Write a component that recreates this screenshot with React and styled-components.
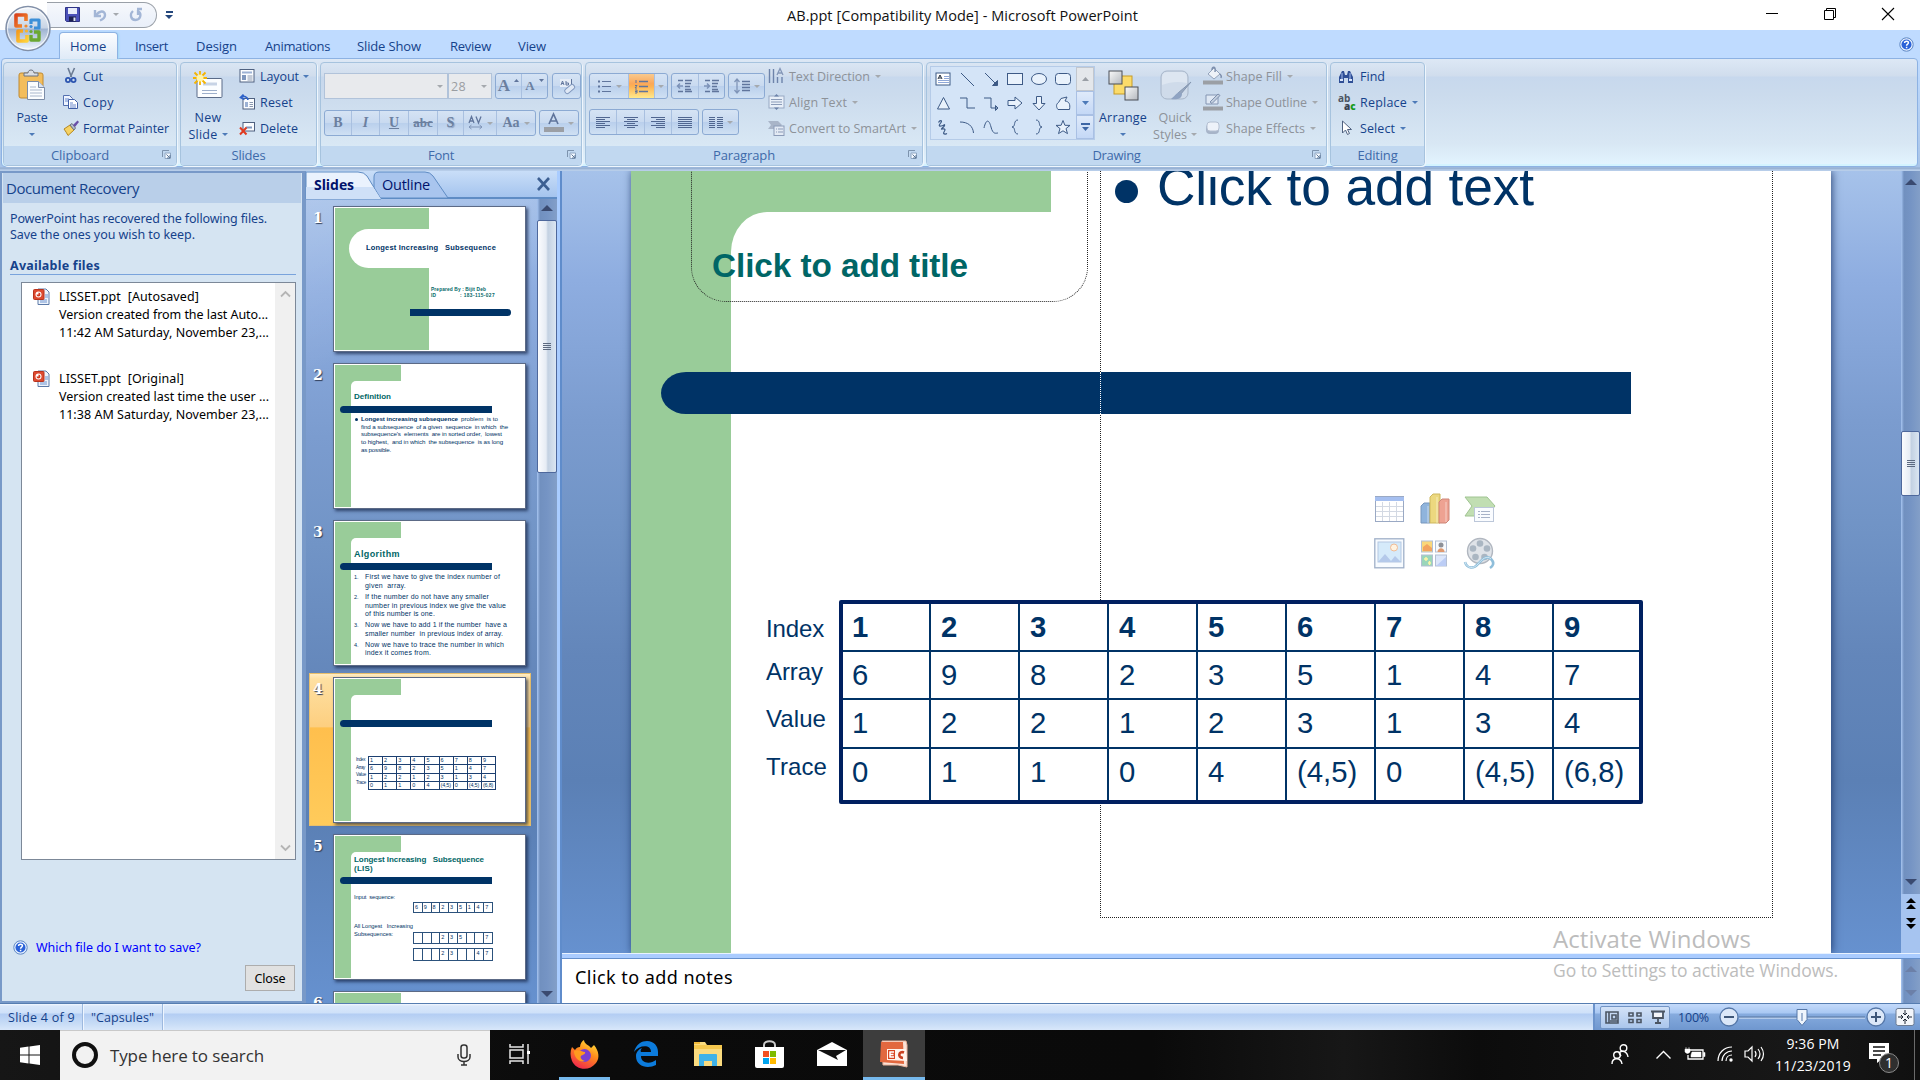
import React, { useLayoutEffect, useRef } from "react";
import styled, { createGlobalStyle, css } from "styled-components";

const UI = '"Open Sans", "Noto Sans", sans-serif';
const TAHOMA = '"Noto Sans", "Open Sans", sans-serif';
const ARIAL = '"Liberation Sans", Arial, sans-serif';

const Global = createGlobalStyle`
  *, *::before, *::after { box-sizing: border-box; }
  body { margin: 0; background: #fff; overflow: hidden; font-family: ${UI}; }
`;

/* ---------- text that spreads its letters over a given width ---------- */
const TextBox = styled.span`
  display: inline-block;
  flex: none;
  width: fit-content;
  white-space: pre;
  font-family: ${(p) => p.$font || "inherit"};
  font-size: ${(p) => p.$size || 12.5}px;
  font-weight: ${(p) => (p.$bold ? 700 : 400)};
  color: ${(p) => p.$color || "inherit"};
  line-height: ${(p) => (p.$lh ? p.$lh + "px" : "normal")};
`;

function Text({ w, size, bold, color, font, lh, children }) {
  const ref = useRef(null);
  useLayoutEffect(() => {
    const el = ref.current;
    if (!w || !el) return;
    el.style.letterSpacing = "0px";
    const natural = el.getBoundingClientRect().width;
    el.style.letterSpacing = (w - natural) / el.textContent.length + "px";
  }, [w, children]);
  return (
    <TextBox ref={ref} $size={size} $bold={bold} $color={color} $font={font} $lh={lh}>
      {children}
    </TextBox>
  );
}

const Svg = styled.svg`
  display: block;
  flex: none;
  overflow: visible;
`;

function Icon({ w = 16, h = 16, vb, children }) {
  return (
    <Svg width={w} height={h} viewBox={vb || `0 0 ${w} ${h}`} fill="none">
      {children}
    </Svg>
  );
}

const Caret = styled.i`
  flex: none;
  width: 0;
  height: 0;
  border: 3px solid transparent;
  border-top-color: ${(p) => (p.$dim ? "#a5a9ae" : "#4d7ab8")};
  border-bottom: 0;
  margin-left: ${(p) => p.$ml || 0}px;
`;

/* ---------- window frame ---------- */
const Screen = styled.div`
  width: 1920px;
  height: 1080px;
  display: flex;
  flex-direction: column;
  overflow: hidden;
  position: relative;
`;

const TitleBar = styled.header`
  height: 30px;
  flex: none;
  background: #fff;
  display: flex;
  align-items: center;
  padding-right: 26px;
`;

const QuickAccess = styled.div`
  width: 110px;
  height: 26px;
  margin: -1px 0 0 47px;
  border: 1px solid #9aa0a8;
  border-left: 0;
  border-radius: 0 13px 13px 0;
  background: linear-gradient(#f6f8fc, #e9eff9);
  display: flex;
  align-items: center;
  padding-left: 18px;
`;

const QuickCell = styled.div`
  width: ${(p) => p.$w}px;
  flex: none;
  display: flex;
`;

const QuickMore = styled.div`
  width: 12px;
  margin-left: 6px;
  display: flex;
  flex-direction: column;
  align-items: center;
  gap: 2px;
  &::before { content: ""; width: 7px; height: 2px; background: #24477c; }
  &::after { content: ""; border: 4px solid transparent; border-top-color: #24477c; border-bottom: 0; }
`;

const TitleText = styled.div`
  margin-left: 612px;
  flex: 1;
  display: flex;
`;

const WinButtons = styled.div`
  display: flex;
  gap: 46px;
  margin-top: -2px;
`;

const Orb = styled.div`
  position: absolute;
  left: 5px;
  top: 5px;
`;

const TabStrip = styled.nav`
  height: 29px;
  flex: none;
  background: #bfdbff;
  display: flex;
  align-items: stretch;
  padding-left: 59px;
  padding-right: 6px;
`;

const Tab = styled.div`
  width: ${(p) => p.$w}px;
  margin-top: 2px;
  padding-top: 1px;
  display: flex;
  align-items: center;
  padding-left: ${(p) => p.$pl}px;
  color: #15428b;
  ${(p) =>
    p.$active &&
    css`
      border: 1px solid #8db2e3;
      border-bottom: 0;
      border-radius: 4px 4px 0 0;
      background: linear-gradient(#fbfdff, #dfeaf7);
      box-shadow: 1px 0 2px #9fd8f5;
      padding-top: 0;
      z-index: 1;
    `}
`;

const HelpSlot = styled.div`
  margin-left: auto;
  padding-top: 7px;
`;

const Ribbon = styled.section`
  height: 109px;
  flex: none;
  margin: -1px 2px 0 1px;
  border: 1px solid #8db2e3;
  border-radius: 4px;
  background: linear-gradient(#dde8f5 0, #d0dded 17px, #c7d8ed 18px, #cbdbed 36px, #d8e7f4 84px, #e3f4ff 106px);
  display: flex;
  padding: 3px 0 0 1px;
  gap: 3px;
  box-shadow: inset 0 -2px 0 #d3f3ff;
`;

const RibbonBack = styled.div`
  flex: none;
  height: 112px;
  background: linear-gradient(#bfdbff 0, #a8c4e8 108px, #8fa9cc 109px, #b7cde9 111px);
`;

const GroupBox = styled.div`
  width: ${(p) => p.$w}px;
  margin-left: ${(p) => p.$ml || 0}px;
  height: 104px;
  flex: none;
  border: 1px solid #a6c3de;
  border-radius: 4px;
  display: flex;
  flex-direction: column;
  box-shadow: 1px 1px 0 #eef6fd;
  overflow: hidden;
`;

const GroupBody = styled.div`
  flex: 1;
  min-height: 0;
  display: flex;
  align-items: flex-start;
`;

const GroupLabel = styled.div`
  height: 19px;
  flex: none;
  background: #c1d8f0;
  color: #3e6aaa;
  display: flex;
  align-items: center;
  justify-content: center;
  padding-right: ${(p) => (p.$launch ? 20 : 0)}px;
  position: relative;
`;

const Launcher = styled.div`
  position: absolute;
  right: 5px;
  top: 4px;
`;

const LAUNCH = (
  <Launcher>
    <Icon w={9} h={9}>
      <path d="M.5 7V.5H7" stroke="#7d93ad" />
      <path d="M3 3h5.500v5.500H3z" fill="#f4f9ff" stroke="#8ea6c2" />
      <path d="M4.500 4.500L8 8M8 5v3H5" stroke="#5c7796" />
    </Icon>
  </Launcher>
);

function Group({ w, ml, label, lw, launch, children }) {
  return (
    <GroupBox $w={w} $ml={ml}>
      <GroupBody>{children}</GroupBody>
      <GroupLabel $launch={launch}>
        <Text w={lw} size={13} lh={17}>{label}</Text>
        {launch && LAUNCH}
      </GroupLabel>
    </GroupBox>
  );
}

const BigButton = styled.div`
  width: ${(p) => p.$w}px;
  margin-left: ${(p) => p.$ml || 0}px;
  height: 82px;
  flex: none;
  padding-top: 7px;
  display: flex;
  flex-direction: column;
  align-items: center;
  color: ${(p) => (p.$dim ? "#8d9299" : "#15428b")};
`;

const BigIcon = styled.div`
  height: 39px;
`;

const BigLine = styled.div`
  height: 17px;
  display: flex;
  align-items: center;
`;

const SmallColumn = styled.div`
  display: flex;
  flex-direction: column;
  margin-left: ${(p) => p.$ml || 0}px;
  flex: none;
`;

const SmallRow = styled.div`
  height: 26px;
  display: flex;
  align-items: center;
  color: ${(p) => (p.$dim ? "#8d9299" : "#15428b")};
`;

const IconSlot = styled.div`
  width: ${(p) => p.$w || 20}px;
  flex: none;
`;

function Small({ icon, slot, w, dim, caret, children }) {
  return (
    <SmallRow $dim={dim}>
      <IconSlot $w={slot}>{icon}</IconSlot>
      <Text w={w} size={12.500} lh={17}>{children}</Text>
      {caret && <Caret $ml={caret} $dim={dim} />}
    </SmallRow>
  );
}

const ToolRows = styled.div`
  display: flex;
  flex-direction: column;
  gap: ${(p) => p.$gap}px;
  padding: 10px 0 0 3px;
  flex: none;
`;

const ToolRow = styled.div`
  display: flex;
  gap: ${(p) => p.$gap ?? 3}px;
  height: 26px;
`;

const ComboBox = styled.div`
  width: ${(p) => p.$w}px;
  margin-right: ${(p) => p.$mr || 0}px;
  border: 1px solid #b1c3da;
  background: #e8eaed;
  display: flex;
  align-items: center;
  justify-content: space-between;
  padding: 0 4px 0 2px;
  color: #9a9da2;
`;

const ToolGroup = styled.div`
  display: flex;
  border: 1px solid #8caad3;
  border-radius: 3px;
  background: linear-gradient(#d5e3f4 0, #c9daf0 48%, #b9cfec 50%, #cfe0f3 100%);
  overflow: hidden;
  flex: none;
`;

const Tool = styled.div`
  width: ${(p) => p.$w}px;
  display: flex;
  align-items: center;
  justify-content: center;
  gap: 4px;
  color: #6b7f9f;
  & + & { border-left: 1px solid #a9c0e0; }
  ${(p) =>
    p.$on &&
    css`
      background: linear-gradient(#f9c98d 0, #fba85a 40%, #fdb052 50%, #ffe98c 100%);
    `}
`;

const Letter = styled.b`
  font: ${(p) => (p.$light ? 400 : 700)} ${(p) => p.$size || 14}px "Liberation Serif", serif;
  font-style: ${(p) => (p.$italic ? "italic" : "normal")};
  text-decoration: ${(p) => p.$deco || "none"};
  text-shadow: ${(p) => (p.$shadow ? "1px 1px 1px #8da0c0" : "none")};
`;

/* ---------- icons ---------- */
const HelpIcon = () => (
  <Icon w={15} h={15}>
    <circle cx="7.500" cy="7.500" r="6.700" fill="#e9f2ff" stroke="#5c86c4" />
    <circle cx="7.500" cy="7.500" r="5" fill="#2b62d8" />
    <path d="M5.600 6c0-2.500 4-2.300 3.800 0c-.1 1.200-1.800 1.200-1.800 2.700M7.600 9.800v1.400" stroke="#fff" strokeWidth="1.500" />
  </Icon>
);

const OfficeOrb = () => (
  <Icon w={47} h={47}>
    <defs>
      <linearGradient id="orb" x1="0" y1="0" x2="0" y2="1">
        <stop offset="0" stopColor="#f4f7fb" />
        <stop offset=".48" stopColor="#c9d5e6" />
        <stop offset=".52" stopColor="#9fb4d2" />
        <stop offset="1" stopColor="#f3f9ff" />
      </linearGradient>
      <linearGradient id="orbR" x1="0" y1="0" x2="1" y2="1">
        <stop offset="0" stopColor="#d9431c" />
        <stop offset="1" stopColor="#f7912d" />
      </linearGradient>
      <linearGradient id="orbY" x1="0" y1="0" x2="1" y2="1">
        <stop offset="0" stopColor="#f59b1c" />
        <stop offset="1" stopColor="#ffd23a" />
      </linearGradient>
    </defs>
    <circle cx="23" cy="23.500" r="22" fill="url(#orb)" stroke="#8290a8" strokeWidth="1.500" />
    <circle cx="23" cy="23.500" r="20.500" stroke="#fff" opacity=".8" />
    <path d="M17 21h-6V10h10v6" stroke="url(#orbR)" strokeWidth="3.600" strokeLinejoin="round" />
    <path d="M26 19v-4h8v8h-5" stroke="#3b8fd8" strokeWidth="3.200" strokeLinejoin="round" />
    <path d="M18 26h-5v10h9v-6" stroke="url(#orbY)" strokeWidth="3.600" strokeLinejoin="round" />
    <path d="M26 30v5h8v-8h-5" stroke="#6ba832" strokeWidth="3.400" strokeLinejoin="round" />
    <circle cx="21" cy="21" r="1.600" fill="#f08a2c" />
    <circle cx="26" cy="21.500" r="1.600" fill="#3b8fd8" />
    <circle cx="21.500" cy="26" r="1.600" fill="#f9b52a" />
    <circle cx="26" cy="26.500" r="1.600" fill="#6ba832" />
  </Icon>
);

const SaveIcon = () => (
  <Icon w={15} h={15}>
    <path d="M.5.5h14v14h-13l-1-1z" fill="#4a50b8" stroke="#2f3486" />
    <path d="M3 1h9v6H3z" fill="#e8ecfa" />
    <path d="M4 9.500h7v5H4z" fill="#1c2050" />
    <path d="M8.500 10.500h2v3.500h-2z" fill="#dfe5f7" />
  </Icon>
);

const UndoIcon = () => (
  <Icon w={14} h={14}>
    <path d="M2 2v6h6" stroke="#a3b6d6" strokeWidth="2.400" />
    <path d="M3 7.500C6 2.500 12 2 12 7c0 3-2.500 4.500-5 5.500" stroke="#a3b6d6" strokeWidth="2.400" />
  </Icon>
);
const RedoIcon = () => (
  <Icon w={14} h={14}>
    <path d="M4 3C.5 6 1.500 12 6.500 12S13 6 9.500 3.500M8 1h5M9 2v5" stroke="#a3b6d6" strokeWidth="2.300" />
  </Icon>
);

const PasteIcon = () => (
  <Icon w={28} h={30}>
    <rect x="1" y="3" width="24" height="25" rx="2" fill="#f3bd5c" stroke="#c08a32" />
    <path d="M6 6V3h4c0-4 6-4 6 0h4v3z" fill="#d9dde4" stroke="#6b7280" />
    <path d="M9.500 11.500h11l6 6v12h-17z" fill="#fbfdff" stroke="#7c8da8" />
    <path d="M20.500 11.500v6h6" fill="#dbe4f1" stroke="#7c8da8" />
    <path d="M12 17h6M12 20h12M12 23h12M12 26h12" stroke="#a9b7cc" />
  </Icon>
);

const CutIcon = () => (
  <Icon w={16} h={16}>
    <path d="M5 0l3.500 9M11.500 0L7.500 9" stroke="#6b7b93" strokeWidth="1.600" />
    <circle cx="5" cy="12" r="2.100" stroke="#2d55b0" strokeWidth="1.800" />
    <circle cx="10.500" cy="12" r="2.100" stroke="#2d55b0" strokeWidth="1.800" />
  </Icon>
);

const CopyIcon = () => (
  <Icon w={16} h={16}>
    <path d="M.5 1.500h6l3 3v7h-9z" fill="#eef4ff" stroke="#5470b0" />
    <path d="M5.500 5.500h6l3 3v6h-9z" fill="#fff" stroke="#3f5ea6" />
    <path d="M2 5h4M2 7h3M7 9h3M7 11h6M7 13h6" stroke="#6a89cc" />
  </Icon>
);

const PainterIcon = () => (
  <Icon w={16} h={16}>
    <path d="M1 9l6-4 4 5-6 5.500c-1-2-2.500-4.500-4-6.500z" fill="#f6d264" stroke="#b58820" />
    <path d="M7 5l2-1.500L12.500 8 11 10z" fill="#b8c0cc" stroke="#6b7280" />
    <path d="M10 5l4.500-4.500L16 2l-4 5z" fill="#6a4fa8" />
  </Icon>
);

const NewSlideIcon = () => (
  <Icon w={32} h={30}>
    <rect x="5" y="8.500" width="25" height="19" rx="1" fill="#fbfdff" stroke="#5a6b88" />
    <path d="M10 20.500h15M10 23.500h15" stroke="#9dafcb" />
    <path d="M11 14h14" stroke="#c7d3e5" strokeWidth="3" />
    <g stroke="#f5b400" strokeWidth="1.800">
      <path d="M8 1v14M1 8h14M2.500 2.500l11 11M13.500 2.500l-11 11" />
    </g>
    <circle cx="8" cy="8" r="3.500" fill="#fff3a8" />
  </Icon>
);

const LayoutIcon = () => (
  <Icon w={16} h={14}>
    <rect x="1" y=".5" width="14" height="12.500" fill="#fbfdff" stroke="#4f6180" />
    <path d="M3 3.500h10" stroke="#9db2d4" strokeWidth="2" />
    <path d="M3 6h4v5H3z" fill="#7f97bd" />
    <path d="M8.500 7h5M8.500 9h5M8.500 11h5" stroke="#8b99b0" />
  </Icon>
);
const ResetIcon = () => (
  <Icon w={16} h={16}>
    <rect x="4" y="4.500" width="11.500" height="10.500" fill="#fbfdff" stroke="#4f6180" />
    <path d="M6 8h3v5H6z" fill="#9db2d4" />
    <path d="M10.500 8.500h3.500M10.500 10.500h3.500M10.500 12.500h3.500" stroke="#8b99b0" />
    <path d="M9 6C8.500 2.500 5 1.500 2 3.500M4.500.5L1.500 3.500l4 2" stroke="#2f62c8" strokeWidth="1.700" />
  </Icon>
);
const DeleteIcon = () => (
  <Icon w={16} h={16}>
    <rect x="4" y="2.500" width="11.500" height="8.500" fill="#fbfdff" stroke="#4f6180" />
    <path d="M7 7.500h6" stroke="#7f97bd" strokeWidth="2" />
    <path d="M1 7.500l6.500 7M7.500 7.500l-6.500 7" stroke="#e03a20" strokeWidth="2" />
  </Icon>
);

const lines = (ys, x1 = 0, x2 = 15) => ys.map(([y, a, b]) => `M${a ?? x1} ${y}h${(b ?? x2) - (a ?? x1)}`).join("");
const INK = "#60759c";

const Bullets = () => (
  <Icon w={15} h={14}>
    <path d="M5 2.500h9M5 7.500h9M5 12.500h9" stroke={INK} />
    <path d="M1 2.500h2M1 7.500h2M1 12.500h2" stroke={INK} strokeWidth="2" />
  </Icon>
);
const Numbering = () => (
  <Icon w={15} h={14}>
    <path d="M5 2.500h9M5 7.500h9M5 12.500h9" stroke={INK} strokeWidth="1.300" />
    <path d="M2 1v3M1 6.500h2l-2 2.500h2M1 11h2v3H1M1 12.500h2" stroke={INK} />
  </Icon>
);
const Indent = ({ flip }) => (
  <Icon w={16} h={14}>
    <path d="M1 1.500h5M1 12.500h5M8 1.500h7M8 4.500h6M8 7.500h5M8 10.500h6M8 12.500h7" stroke={INK} strokeWidth="1.300" />
    <path d={flip ? "M0 7h5M3 4.500L5.500 7 3 9.500" : "M6 7H1M3 4.500L.5 7 3 9.500"} stroke="#7c92b8" strokeWidth="1.500" />
  </Icon>
);
const Spacing = () => (
  <Icon w={16} h={16}>
    <path d="M8 3.500h8M8 6.500h8M8 9.500h8M8 12.500h8" stroke={INK} strokeWidth="1.300" />
    <path d="M3 1v14M.5 4L3 1l2.500 3M.5 12L3 15l2.500-3" stroke="#8095b8" strokeWidth="1.300" />
  </Icon>
);
const Align = ({ kind }) => {
  const d = {
    left: [[1.5, 0, 14], [3.5, 0, 9], [5.5, 0, 14], [7.5, 0, 9], [9.5, 0, 14], [11.5, 0, 9]],
    center: [[1.5, 0, 14], [3.5, 3, 11], [5.5, 0, 14], [7.5, 3, 11], [9.5, 0, 14], [11.5, 3, 11]],
    right: [[1.5, 0, 14], [3.5, 5, 14], [5.5, 0, 14], [7.5, 5, 14], [9.5, 0, 14], [11.5, 5, 14]],
    full: [[1.5], [3.5], [5.5], [7.5], [9.5], [11.5]].map(([y]) => [y, 0, 14]),
    columns: [1.5, 3.5, 5.5, 7.5, 9.5, 11.5].flatMap((y) => [[y, 0, 6], [y, 8, 14]]),
  }[kind];
  return (
    <Icon w={14} h={13}>
      <path d={lines(d)} stroke="#506690" strokeWidth="1.100" />
    </Icon>
  );
};

const TextDirIcon = () => (
  <Icon w={17} h={17}>
    <path d="M1.500 1v14M5.500 1v14M9.500 9v6M14 9v6" stroke="#6d83aa" strokeWidth="1.400" />
    <path d="M9 7l3-6.500L15 7M10 5h4" stroke="#8497b8" strokeWidth="1.300" />
  </Icon>
);
const AlignTextIcon = () => (
  <Icon w={17} h={16}>
    <rect x="1" y="2" width="15" height="12" fill="#e8eff8" stroke="#98a9c4" />
    <path d="M3 5.500h11M3 8h11M3 10.500h11" stroke="#8a9bb8" />
    <path d="M6 2.500L8.500 0 11 2.500zM6 13.500L8.500 16l2.500-2.500z" fill="#6d83aa" />
  </Icon>
);
const SmartIcon = () => (
  <Icon w={17} h={16}>
    <path d="M0 1h10l4 4-4 4H0l3-4z" fill="#a9b5c8" />
    <rect x="6" y="6" width="10" height="9.500" fill="#e3eaf4" stroke="#8b9bb8" />
    <path d="M8 9h1M10 9h5M8 12h1M10 12h5" stroke="#8b9bb8" />
  </Icon>
);

const S = "#3d5a86";
const shapes = [
  <><rect x="1" y="2" width="14" height="12" fill="#fff" stroke={S} /><path d="M9 5.500h5M9 7.500h5M3 9.500h11M3 11.500h11" stroke="#8ea7d8" /><path d="M3 8l2-4 2 4M4 7h2" stroke="#1f2937" /></>,
  <path d="M2 2l13 13" stroke={S} />,
  <path d="M2 2l12 12M14.500 9.500v5h-5z" stroke={S} fill={S} />,
  <rect x=".5" y="2.500" width="15" height="11" fill="#e9f2fc" stroke={S} />,
  <ellipse cx="8" cy="8" rx="7.500" ry="5.500" fill="#e9f2fc" stroke={S} />,
  <rect x=".5" y="2.500" width="15" height="11" rx="3" fill="#e9f2fc" stroke={S} />,
  <path d="M8.500 2.500l6 11.500h-12z" fill="#e9f2fc" stroke={S} />,
  <path d="M1 3h7v10h8" stroke={S} />,
  <path d="M1 3h7v10h6M12.500 10.500l2.500 2.500-2.500 2.500z" stroke={S} />,
  <path d="M1 5.500h7V2l7 6-7 6v-3.500H1z" fill="#e9f2fc" stroke={S} />,
  <path d="M5.500 1.500v7H2l6 6.500 6-6.500h-3.500v-7z" fill="#e9f2fc" stroke={S} />,
  <path d="M3 14.500C1 12 1 9 3.500 7.500L6 3.500 12 2 10 6c4 .5 5.500 3 4.500 8.500z" fill="#e9f2fc" stroke={S} />,
  <path d="M3.500 3.500c1.500-3 4-2 2.500 0s-3 4 0 3.500 4-2.500 3.500-.5-5 4-2 3.500 3 1 1.500 3 1.500 2.500 3 1.500" stroke={S} strokeWidth="1.200" />,
  <path d="M1 3c8 0 13 4 13.500 11" stroke={S} />,
  <path d="M1 9C3 0 6 0 8 8s5 6 7 6" stroke={S} />,
  <path d="M11 1C6 1 9 8 5 8c4 0 1 7 6 7" stroke={S} />,
  <path d="M5 1c5 0 2 7 6 7-4 0-1 7-6 7" stroke={S} />,
  <path d="M8 1.500l1.900 4.800 5.100.1-4 3.200 1.500 5L8 11.800 3.500 14.600l1.500-5-4-3.200 5.100-.1z" fill="#e9f2fc" stroke={S} />,
];

const Gallery = styled.div`
  display: flex;
  height: 74px;
  margin: 3px 0 0 3px;
  flex: none;
  background: #d4e4f7;
  border: 1px solid #b5cbe8;
`;
const GalleryGrid = styled.div`
  width: 145px;
  display: grid;
  grid-template-columns: repeat(6, 24px);
  grid-template-rows: repeat(3, 24px);
  place-items: center;
`;
const GalleryBars = styled.div`
  width: 18px;
  display: grid;
  grid-template-rows: repeat(3, 1fr);
`;
const GalleryBar = styled.div`
  border: 1px solid ${(p) => (p.$dim ? "#c2c7ce" : "#a9c0e4")};
  background: ${(p) => (p.$dim ? "#e4e7eb" : "linear-gradient(#dfeafa, #c4d8f6)")};
  display: grid;
  place-content: center;
`;

const ArrangeIcon = () => (
  <Icon w={31} h={31}>
    <defs>
      <linearGradient id="gray" x1="0" y1="0" x2="1" y2="1">
        <stop offset="0" stopColor="#fafafa" />
        <stop offset="1" stopColor="#b4b8be" />
      </linearGradient>
    </defs>
    <rect x="6" y="6" width="18" height="18" fill="#fbdb6a" stroke="#c69b28" />
    <rect x="1" y="1" width="13" height="13" fill="url(#gray)" stroke="#4a4f57" />
    <rect x="17" y="17" width="13" height="13" fill="url(#gray)" stroke="#4a4f57" />
  </Icon>
);
const QuickIcon = () => (
  <Icon w={31} h={31}>
    <rect x="1" y="1" width="27" height="28" rx="6" fill="#cfdbea" stroke="#a7b5c8" />
    <path d="M2 8c0-4 2-6 6-6h13c4 0 6 2 6 6v5c-9-2-17-1-25 2z" fill="#dde6f1" />
    <path d="M31 12L20 25l-2-2z" fill="#98a8c0" stroke="#8496b0" />
    <path d="M20 22c-3 0-4 3-9 7 5 1 11 0 11-5z" fill="#8fa3c2" />
  </Icon>
);
const FillIcon = () => (
  <Icon w={21} h={18}>
    <path d="M5 7l6-6 6 6-6 5z" fill="#eef2f8" stroke="#93a3bc" />
    <path d="M9 3c0-4 4-4 3 2M17 7c2 2 1 4 1 4" stroke="#7e90ae" strokeWidth="1.500" />
    <path d="M0 13.500h20v4H0z" fill="#9b9fa5" />
  </Icon>
);
const OutlineIcon = () => (
  <Icon w={21} h={18}>
    <path d="M15 2H3v9h12z" fill="#dfe8f4" stroke="#8495b2" />
    <path d="M7 9l8-8 2 1.500-8 8z" fill="#c2cede" stroke="#7e90ae" />
    <path d="M0 13.500h20v4H0z" fill="#9b9fa5" />
  </Icon>
);
const EffectsIcon = () => (
  <Icon w={21} h={16}>
    <rect x="3" y="4" width="13" height="10" rx="4" fill="#a7b4c8" />
    <rect x="4" y="2" width="12" height="9" rx="3" fill="#edf2f9" stroke="#b4c0d2" />
  </Icon>
);
const FindIcon = () => (
  <Icon w={16} h={15}>
    <path d="M1 14V8l3-6h2l1 4h2l1-4h2l3 6v6h-5V9H6v5z" fill="#2f4f96" />
    <path d="M4 4v6M12 4v6" stroke="#a9c0ef" />
    <path d="M2 11h3M11 11h3" stroke="#dbe6fb" strokeWidth="2" />
  </Icon>
);
const AbAc = styled.span`
  display: grid;
  font: 700 10px/8px ${UI};
  color: #4b5563;
  height: 16px;
  & b { padding-left: 6px; color: #374151; }
  & i { font-style: normal; color: #179a1c; }
`;
const SelectIcon = () => (
  <Icon w={16} h={16}>
    <path d="M4.500 1v12l3-3 2 4.500 2-1-2-4h4z" fill="#fff" stroke="#4f6180" />
  </Icon>
);

/* ---------- work area ---------- */
const Work = styled.main`
  flex: none;
  height: 832px;
  display: flex;
  background: #7899c8;
`;

const Recovery = styled.aside`
  width: 300px;
  margin: 2px 4px 2px 2px;
  background: #d5e4f2;
  display: flex;
  flex-direction: column;
  color: #15428b;
  flex: none;
`;
const RecoveryHead = styled.div`
  height: 30px;
  margin: 0 1px;
  background: #b9cfe9;
  padding-left: 3px;
  display: flex;
  align-items: center;
`;
const RecoveryIntro = styled.div`
  display: flex;
  flex-direction: column;
  padding: 8px 0 0 8px;
`;
const RecoveryTitle = styled.div`
  margin: 14px 6px 0 8px;
  height: 18px;
  border-bottom: 1px solid #79a3dc;
  display: flex;
`;
const FileList = styled.div`
  margin: 7px 6px 0 19px;
  height: 578px;
  border: 1px solid #7c8898;
  background: #fff;
  color: #000;
  display: flex;
`;
const FileItems = styled.div`
  flex: 1;
  padding: 5px 0 0 11px;
  display: flex;
  flex-direction: column;
  gap: 28px;
`;
const FileItem = styled.div`
  display: flex;
  gap: 9px;
`;
const FileLines = styled.div`
  display: flex;
  flex-direction: column;
`;
const FileScroll = styled.div`
  width: 20px;
  flex: none;
  background: #f0f0f0;
  display: flex;
  flex-direction: column;
  justify-content: space-between;
  align-items: center;
  padding: 8px 0;
`;
const HelpLink = styled.div`
  margin: 78px 0 0 11px;
  height: 18px;
  display: flex;
  align-items: center;
  gap: 8px;
`;
const CloseButton = styled.div`
  width: 50px;
  height: 26px;
  margin: 9px 7px 0 auto;
  border: 1px solid #adadad;
  background: #e1e1e1;
  color: #000;
  display: grid;
  place-items: center;
`;

const PptIcon = () => (
  <Icon w={17} h={17}>
    <path d="M5 1h8l3 3v12.500H5z" fill="#eef4fc" stroke="#5c7aa8" />
    <path d="M7 12h7M7 14h7M12 7h3M12 9h3" stroke="#6f94cf" />
    <rect x=".5" y="1.500" width="10.500" height="10" rx="1" fill="#dd4a30" stroke="#b8321c" />
    <circle cx="5.500" cy="6.500" r="3" fill="#fff" />
    <path d="M5.500 6.500V4.500a2 2 0 1 1-2 2z" fill="#d2391f" />
  </Icon>
);

const paneBlue = "linear-gradient(#a6c2ea 0, #8eade0 14%, #7b9ccf 32%, #7194c6 45%, #6386ba 62%, #5b80b5 78%, #6691cf 100%)";

const SlidesPane = styled.section`
  width: 254px;
  flex: none;
  display: flex;
  flex-direction: column;
  background: ${paneBlue};
  border-right: 3px solid #a9ccff;
`;
const PaneTabs = styled.div`
  height: 28px;
  flex: none;
  display: flex;
  align-items: center;
  background: linear-gradient(#c9def8, #a5c4ee);
  border-bottom: 2px solid #5f8cc4;
  position: relative;
  color: #00126b;
`;
const PaneTabShapes = styled.div`
  position: absolute;
  left: 0;
  top: 0;
`;
const PaneTabText = styled.div`
  position: relative;
  margin-left: ${(p) => p.$ml}px;
  width: ${(p) => p.$w}px;
`;
const PaneBody = styled.div`
  flex: 1;
  display: flex;
  min-height: 0;
`;
const ThumbList = styled.div`
  width: 231px;
  padding: 3px 0 0 3px;
  display: flex;
  flex-direction: column;
  overflow: hidden;
  gap: 4px;
  flex: none;
  background: linear-gradient(155deg, rgba(255, 255, 255, 0.16) 0, rgba(255, 255, 255, 0.02) 150px, transparent 160px);
`;
const ThumbRow = styled.div`
  width: 222px;
  height: 153px;
  flex: none;
  padding-top: 4px;
  display: flex;
  ${(p) =>
    p.$on &&
    css`
      background: linear-gradient(#fff0cd 0, #fee0a2 6px, #fdcf80 35%, #ffbf4d 36%, #ffcb5b 100%);
      box-shadow: inset 0 0 0 1px #e8bf6c;
    `}
`;
const ThumbNo = styled.div`
  width: 24px;
  padding: 3px 0 0 4px;
  font: 700 14px/18px "DejaVu Serif", "Liberation Serif", serif;
  color: #fff;
  text-shadow: 1px 1px 1px #33415c;
`;
const ThumbSlide = styled.div`
  width: 193px;
  height: 146px;
  border: 1px solid #5c6a86;
  box-shadow: 2px 2px 3px rgba(20, 35, 70, 0.7);
  background: #fff;
  position: relative;
  overflow: hidden;
  font-family: ${ARIAL};
  color: #003366;
`;
const Placed = styled.div`
  position: absolute;
  left: ${(p) => p.$x}px;
  top: ${(p) => p.$y}px;
  line-height: 0;
`;
const Block = styled.div`
  position: absolute;
  left: ${(p) => p.$x}px;
  top: ${(p) => p.$y}px;
  width: ${(p) => p.$w}px;
  height: ${(p) => p.$h}px;
  background: ${(p) => p.$bg};
  border-radius: ${(p) => p.$r || 0};
`;

const Mini = ({ x, y, w, children, size = 7, bold, color }) => (
  <Placed $x={x - 1} $y={y - 6}>
    <Text w={w} size={size} lh={10} bold={bold} color={color} font={ARIAL}>{children}</Text>
  </Placed>
);

const MiniGrid = styled.div`
  position: absolute;
  left: ${(p) => p.$x}px;
  top: ${(p) => p.$y}px;
  width: ${(p) => p.$w}px;
  height: ${(p) => p.$h}px;
  display: grid;
  grid-template-columns: repeat(9, 1fr);
  gap: ${(p) => p.$gap || "1px"};
  padding: 1px;
  background: ${(p) => p.$line || "#2c527c"};
  & > span {
    background: #fff;
    font-size: ${(p) => p.$fs || 5.5}px;
    line-height: ${(p) => p.$lh}px;
    padding-left: 1px;
    overflow: hidden;
    white-space: nowrap;
    letter-spacing: -0.2px;
  }
`;

const GREEN = "#99cc99";
const NAVY = "#003366";
const TEAL = "#006666";

const MiniMaster = () => (
  <>
    <Block $x={1} $y={1} $w={66} $h={40} $bg={GREEN} />
    <Block $x={1} $y={1} $w={16} $h={142} $bg={GREEN} />
    <Block $x={17} $y={17} $w={60} $h={40} $bg="#fff" $r="5px 0 0 0" />
    <Block $x={6} $y={42} $w={152} $h={7} $bg={NAVY} $r="4px 0 0 4px" />
  </>
);

const rows = [
  ["1", "2", "3", "4", "5", "6", "7", "8", "9"],
  ["6", "9", "8", "2", "3", "5", "1", "4", "7"],
  ["1", "2", "2", "1", "2", "3", "1", "3", "4"],
  ["0", "1", "1", "0", "4", "(4,5)", "0", "(4,5)", "(6,8)"],
];

const thumbs = [
  <>
    <Block $x={1} $y={1} $w={94} $h={142} $bg={GREEN} />
    <Block $x={15} $y={22} $w={90} $h={39} $bg="#fff" $r="20px 0 0 20px" />
    <Mini x={33} y={42} w={130} bold size={7.500}>{"Longest Increasing   Subsequence"}</Mini>
    <Mini x={98} y={84} w={55} bold size={4.800} color={TEAL}>Prepared By : Bijit Deb</Mini>
    <Mini x={98} y={90} w={5} bold size={4.800} color={TEAL}>ID</Mini>
    <Mini x={127} y={90} w={35} bold size={4.800} color={TEAL}>: 183-115-027</Mini>
    <Block $x={76} $y={102} $w={101} $h={7} $bg={NAVY} $r="0 4px 4px 0" />
  </>,
  <>
    <MiniMaster />
    <Mini x={21} y={34} w={37} bold size={8} color={TEAL}>Definition</Mini>
    <Block $x={21} $y={54} $w={3} $h={3} $bg={NAVY} $r="2px" />
    <Mini x={28} y={56} w={97} bold size={6.200}>Longest increasing subsequence</Mini>
    <Mini x={128} y={56} w={37} size={6.200}>problem  is to</Mini>
    <Mini x={28} y={64} w={147} size={6.200}>find a subsequence  of a given  sequence  in which  the</Mini>
    <Mini x={28} y={71} w={141} size={6.200}>subsequence's  elements  are in sorted order,  lowest</Mini>
    <Mini x={28} y={79} w={142} size={6.200}>to highest,  and in which  the subsequence  is as long</Mini>
    <Mini x={28} y={87} w={30} size={6.200}>as possible.</Mini>
  </>,
  <>
    <MiniMaster />
    <Mini x={21} y={34} w={46} bold size={9} color={TEAL}>Algorithm</Mini>
    {[[57, "1."], [77, "2."], [105, "3."], [125, "4."]].map(([y, t]) => (
      <Mini key={t} x={21} y={y} size={5.500}>{t}</Mini>
    ))}
    <Mini x={32} y={57} w={135}>First we have to give the index number of</Mini>
    <Mini x={32} y={66} w={41}>given  array.</Mini>
    <Mini x={32} y={77} w={124}>If the number do not have any smaller</Mini>
    <Mini x={32} y={86} w={141}>number in previous index we give the value</Mini>
    <Mini x={32} y={94} w={70}>of this number is one.</Mini>
    <Mini x={32} y={105} w={142}>Now we have to add 1 if the number  have a</Mini>
    <Mini x={32} y={114} w={138}>smaller number  in previous index of array.</Mini>
    <Mini x={32} y={125} w={139}>Now we have to trace the number in which</Mini>
    <Mini x={32} y={133} w={66}>index it comes from.</Mini>
  </>,
  <>
    <MiniMaster />
    <Mini x={23} y={83} w={9} size={4.500}>Index</Mini>
    <Mini x={23} y={91} w={9} size={4.500}>Array</Mini>
    <Mini x={23} y={98} w={10} size={4.500}>Value</Mini>
    <Mini x={23} y={106} w={10} size={4.500}>Trace</Mini>
    <MiniGrid $x={34} $y={78} $w={128} $h={34} $lh={6.500} $line="#1c3f70">
      {rows.flatMap((r, i) => r.map((c, j) => <span key={`${i}-${j}`}>{c}</span>))}
    </MiniGrid>
  </>,
  <>
    <MiniMaster />
    <Mini x={21} y={26} w={130} bold size={8} color={TEAL}>{"Longest Increasing   Subsequence"}</Mini>
    <Mini x={21} y={35} w={19} bold size={8} color={TEAL}>(LIS)</Mini>
    <Mini x={21} y={63} w={41} size={5.800}>Input  sequence:</Mini>
    <MiniGrid $x={79} $y={67} $w={80} $h={11} $lh={9}>
      {["6", "9", "8", "2", "3", "5", "1", "4", "7"].map((c, i) => <span key={i}>{c}</span>)}
    </MiniGrid>
    <Mini x={21} y={92} w={59} size={5.800}>All Longest   Increasing</Mini>
    <Mini x={21} y={100} w={39} size={5.800}>Subsequences:</Mini>
    <MiniGrid $x={79} $y={97} $w={80} $h={12} $lh={9}>
      {["", "", "", "2", "3", "5", "", "", "7"].map((c, i) => <span key={i}>{c}</span>)}
    </MiniGrid>
    <MiniGrid $x={79} $y={113} $w={80} $h={13} $lh={9}>
      {["", "", "", "2", "3", "", "", "4", "7"].map((c, i) => <span key={i}>{c}</span>)}
    </MiniGrid>
  </>,
  <MiniMaster />,
];

const ScrollTrack = styled.div`
  width: ${(p) => p.$w}px;
  flex: ${(p) => (p.$grow ? 1 : "none")};
  background: linear-gradient(90deg, #a7c5f1 0, #7190bf 3px, #7594c4 50%, #839fc8 100%);
  display: flex;
  flex-direction: column;
  align-items: center;
`;
const Arrow = styled.i`
  width: 0;
  height: 0;
  flex: none;
  border: ${(p) => p.$s || 6}px solid transparent;
  ${(p) =>
    p.$up
      ? css`border-bottom-color: ${p.$c || "#3a4a70"}; border-top: 0;`
      : css`border-top-color: ${p.$c || "#3a4a70"}; border-bottom: 0;`}
  margin-top: ${(p) => p.$mt || 0}px;
`;
const Thumb = styled.div`
  width: 100%;
  height: ${(p) => p.$h}px;
  margin-top: ${(p) => p.$mt}px;
  flex: none;
  border: 1px solid #4e689c;
  border-radius: 2px;
  background: linear-gradient(90deg, #fbfcfe 0, #e6ecf4 45%, #c3d1e2 55%, #dbe6f2 100%);
  display: grid;
  place-content: center;
  &::before {
    content: "";
    width: 8px;
    height: 8px;
    background: repeating-linear-gradient(#5d6a80 0 1px, transparent 1px 2px);
  }
`;

const EditorColumn = styled.section`
  flex: 1;
  display: flex;
  flex-direction: column;
  border-left: 2px solid #5f8ccb;
`;
const EditorArea = styled.div`
  height: 782px;
  display: flex;
`;
const Canvas = styled.div`
  width: 1339px;
  flex: none;
  background: ${paneBlue};
  position: relative;
  overflow: hidden;
`;
const Slide = styled.div`
  position: absolute;
  left: 69px;
  top: 0;
  width: 1200px;
  height: 782px;
  background: #fff;
  color: ${NAVY};
  font-family: ${ARIAL};
  box-shadow: 1px 0 8px rgba(25, 50, 100, 0.85);
`;
const Dotted = styled.div`
  position: absolute;
  left: ${(p) => p.$x}px;
  top: ${(p) => p.$y}px;
  width: ${(p) => p.$w}px;
  height: ${(p) => p.$h}px;
  border: 1px dotted ${(p) => p.$c || "#222"};
  border-radius: ${(p) => p.$r || 0};
  ${(p) => p.$leftOnly && "border-width: 0 0 0 1px;"}
`;
const Table = styled.div`
  position: absolute;
  left: 208px;
  top: 429px;
  width: 804px;
  height: 204px;
  border: 4px solid #002060;
  border-radius: 2px;
  background: #fff;
  display: grid;
  grid-template-columns: 86px repeat(7, 89px) 1fr;
  grid-template-rows: 46px 48px 49px 1fr;
`;
const Cell = styled.div`
  border-left: ${(p) => (p.$first ? 0 : 2)}px solid ${NAVY};
  border-top: ${(p) => (p.$top ? 0 : 2)}px solid ${NAVY};
  padding-left: ${(p) => (p.$first ? 9 : 10)}px;
  font-size: 29.3px;
  line-height: ${(p) => (p.$top ? 45 : 46)}px;
  font-weight: ${(p) => (p.$top ? 700 : 400)};
  overflow: hidden;
  white-space: nowrap;
`;
const Bullet = styled.div`
  position: absolute;
  left: 484px;
  top: 9px;
  width: 23px;
  height: 23px;
  border-radius: 50%;
  background: ${NAVY};
`;
const Faded = styled.div`
  position: absolute;
  left: 743px;
  top: 322px;
  display: grid;
  grid-template-columns: 46px 44px 32px;
  grid-template-rows: 45px 32px;
`;

const RightScroll = styled.div`
  width: 19px;
  display: flex;
  flex-direction: column;
`;
const PageButtons = styled.div`
  height: 59px;
  background: #a6c4f0;
  display: flex;
  flex-direction: column;
  align-items: center;
  padding-top: 4px;
`;
const Splitter = styled.div`
  height: 6px;
  flex: none;
  background: #aaccff;
  border-top: 1px solid #e8f2ff;
  border-bottom: 1px solid #6590cc;
`;
const Notes = styled.div`
  flex: 1;
  display: flex;
  background: #fff;
`;
const NotesText = styled.div`
  width: 1339px;
  padding: 6px 0 0 13px;
`;

const Watermark = styled.div`
  position: absolute;
  left: 1553px;
  top: 922px;
  display: flex;
  flex-direction: column;
  color: #bcbcbc;
`;

/* ---------- status bar ---------- */
const StatusBar = styled.footer`
  height: 27px;
  flex: none;
  border-top: 1px solid #567db1;
  background: linear-gradient(#f3f8ff 0, #d9e7fa 2px, #cfe1f9 9px, #b3cdf3 10px, #c6dbf6 19px, #d8e7fa 26px);
  display: flex;
  color: #15428b;
  padding-left: 8px;
`;
const StatusCell = styled.div`
  width: ${(p) => p.$w}px;
  margin-right: ${(p) => p.$mr}px;
  border-right: 1px solid #9db9df;
  box-shadow: 1px 0 0 #eef5ff;
  display: flex;
  align-items: center;
`;
const StatusRight = styled.div`
  margin-left: auto;
  width: 327px;
  border-left: 2px solid #6b93cc;
  background: linear-gradient(#c4dafa 0, #a9c8f3 9px, #86abde 10px, #6f97cf 26px);
  display: flex;
  align-items: center;
  padding-left: 5px;
`;
const ViewButtons = styled.div`
  height: 23px;
  width: 70px;
  border: 1px solid #7294c4;
  border-radius: 2px;
  background: linear-gradient(#d3e2f7, #aac6ec);
  display: grid;
  grid-template-columns: repeat(3, 1fr);
  place-items: center;
  margin-right: 8px;
`;

/* ---------- taskbar ---------- */
const TaskBar = styled.footer`
  height: 50px;
  flex: none;
  background: linear-gradient(90deg, #161616, #0b0b0b 30%, #0a0a0a 60%, #171717 70%, #0c0c0c 77%, #171717 93%, #101010);
  display: flex;
  color: #fff;
`;
const StartCell = styled.div`
  width: 60px;
  display: grid;
  place-items: center;
`;
const Search = styled.div`
  width: 430px;
  background: #f2f2f2;
  border-top: 1px solid #c9c9c9;
  display: flex;
  align-items: center;
  padding: 0 19px 1px 12px;
  color: #333;
  & > svg:last-child { margin-left: auto; }
`;
const Ring = styled.div`
  width: 26px;
  height: 26px;
  border: 4px solid #101010;
  border-radius: 50%;
  margin-right: 12px;
`;
const TaskCell = styled.div`
  width: ${(p) => p.$w || 62}px;
  display: grid;
  place-items: center;
  padding: 0 1px 2px 0;
  background: ${(p) => (p.$on ? "#3d3d3d" : "transparent")};
  box-shadow: ${(p) => (p.$line ? "inset 0 -3px 0 #76b9ed" : "none")};
  margin-right: ${(p) => p.$mr || 0}px;
  margin-left: ${(p) => p.$ml || 0}px;
`;
const Tray = styled.div`
  margin-left: auto;
  display: flex;
  align-items: center;
`;
const TrayCell = styled.div`
  width: ${(p) => p.$w}px;
  flex: none;
`;
const TrayIcons = styled.div`
  display: flex;
  align-items: center;
  margin: -2px 2px 0 -2px;
`;
const Clock = styled.div`
  width: 78px;
  display: flex;
  flex-direction: column;
  align-items: center;
  margin-right: 17px;
`;
const ShowDesktop = styled.div`
  width: 6px;
  height: 50px;
  border-left: 1px solid #6b6b6b;
`;

const RibbonBar = () => (
  <Ribbon>
    <Group w={174} label="Clipboard" lw={58} launch>
      <BigButton $w={56}>
        <BigIcon><PasteIcon /></BigIcon>
        <BigLine><Text w={31}>Paste</Text></BigLine>
        <BigLine><Caret /></BigLine>
      </BigButton>
      <SmallColumn $ml={3}>
        <Small icon={<CutIcon />} w={20}>Cut</Small>
        <Small icon={<CopyIcon />} w={31}>Copy</Small>
        <Small icon={<PainterIcon />} w={86}>Format Painter</Small>
      </SmallColumn>
    </Group>
    <Group w={137} label="Slides" lw={34}>
      <BigButton $w={54}>
        <BigIcon><NewSlideIcon /></BigIcon>
        <BigLine><Text w={27}>New</Text></BigLine>
        <BigLine><Text w={29}>Slide</Text><Caret $ml={4} /></BigLine>
      </BigButton>
      <SmallColumn $ml={4}>
        <Small icon={<LayoutIcon />} slot={21} w={39} caret={4}>Layout</Small>
        <Small icon={<ResetIcon />} slot={21} w={33}>Reset</Small>
        <Small icon={<DeleteIcon />} slot={21} w={38}>Delete</Small>
      </SmallColumn>
    </Group>
    <Group w={262} label="Font" lw={26} launch>
      <ToolRows $gap={11}>
        <ToolRow $gap={0}>
          <ComboBox $w={124}><span /><Caret $dim /></ComboBox>
          <ComboBox $w={44} $mr={3}><Text w={15}>28</Text><Caret $dim /></ComboBox>
          <ToolGroup>
            <Tool $w={25}><Letter $size={17}>A</Letter><Icon w={5} h={14}><path d="M0 3l2.500-3L5 3z" fill="#60759c" /></Icon></Tool>
            <Tool $w={26}><Letter $size={13}>A</Letter><Icon w={5} h={14}><path d="M0 0h5L2.500 3z" fill="#60759c" /></Icon></Tool>
          </ToolGroup>
          <Tool $w={4} />
          <ToolGroup>
            <Tool $w={27}>
              <Icon w={16} h={16}>
                <path d="M1 1h11v8H1z" fill="#e6edf7" />
                <path d="M2 7l1.500-4L5 7M2.500 5.500h2M7 3v4h2.500V5H7M12.500 1v7" stroke="#60759c" />
                <rect x="5" y="9" width="11" height="5" rx="2" transform="rotate(-40 10 11)" fill="#dfe8f5" stroke="#8097bd" />
              </Icon>
            </Tool>
          </ToolGroup>
        </ToolRow>
        <ToolRow>
          <ToolGroup>
            <Tool $w={26}><Letter>B</Letter></Tool>
            <Tool $w={28}><Letter $italic>I</Letter></Tool>
            <Tool $w={29}><Letter $deco="underline">U</Letter></Tool>
            <Tool $w={29}><Letter $size={13} $deco="line-through">abc</Letter></Tool>
            <Tool $w={26}><Letter $shadow>S</Letter></Tool>
            <Tool $w={33}>
              <Icon w={15} h={14}>
                <path d="M1 .5L3.500 7 6 .5M8 7L10.500.5 13 7M9 5h3" stroke={INK} strokeWidth="1.300" transform="translate(14 0) scale(-1 1)" />
                <path d="M1 11h13M3.500 9L1 11l2.500 2M11.500 9l2.500 2-2.500 2" stroke="#8095b8" />
              </Icon>
              <Caret $dim />
            </Tool>
            <Tool $w={39}><Letter $size={14}>Aa</Letter><Caret $dim /></Tool>
          </ToolGroup>
          <ToolGroup>
            <Tool $w={38}>
              <Icon w={20} h={18}>
                <path d="M5 10L9.500 0 14 10M6.500 7h6" stroke={INK} strokeWidth="1.700" />
                <path d="M0 13h20v5H0z" fill="#9b9fa5" />
              </Icon>
              <Caret $dim />
            </Tool>
          </ToolGroup>
        </ToolRow>
      </ToolRows>
    </Group>
    <Group w={338} label="Paragraph" lw={62} launch>
      <ToolRows $gap={10}>
        <ToolRow>
          <ToolGroup>
            <Tool $w={38}><Bullets /><Caret $dim /></Tool>
            <Tool $w={26} $on><Numbering /></Tool>
            <Tool $w={13}><Caret $dim /></Tool>
          </ToolGroup>
          <ToolGroup>
            <Tool $w={26}><Indent /></Tool>
            <Tool $w={26}><Indent flip /></Tool>
          </ToolGroup>
          <ToolGroup><Tool $w={35}><Spacing /><Caret $dim /></Tool></ToolGroup>
        </ToolRow>
        <ToolRow>
          <ToolGroup>
            <Tool $w={26}><Align kind="left" /></Tool>
            <Tool $w={28}><Align kind="center" /></Tool>
            <Tool $w={27}><Align kind="right" /></Tool>
            <Tool $w={27}><Align kind="full" /></Tool>
          </ToolGroup>
          <ToolGroup><Tool $w={35}><Align kind="columns" /><Caret $dim /></Tool></ToolGroup>
        </ToolRow>
      </ToolRows>
      <SmallColumn $ml={3}>
        <Small dim icon={<TextDirIcon />} slot={21} w={81} caret={5}>Text Direction</Small>
        <Small dim icon={<AlignTextIcon />} slot={21} w={58} caret={5}>Align Text</Small>
        <Small dim icon={<SmartIcon />} slot={21} w={117} caret={5}>Convert to SmartArt</Small>
      </SmallColumn>
    </Group>
    <Group w={401} label="Drawing" lw={48} launch>
      <Gallery>
        <GalleryGrid>
          {shapes.map((s, i) => <Icon key={i} w={16} h={16}>{s}</Icon>)}
        </GalleryGrid>
        <GalleryBars>
          <GalleryBar $dim><Icon w={7} h={4}><path d="M0 4l3.500-4L7 4z" fill="#9a9fa6" /></Icon></GalleryBar>
          <GalleryBar><Icon w={7} h={4}><path d="M0 0h7L3.500 4z" fill="#4d7ab8" /></Icon></GalleryBar>
          <GalleryBar><Icon w={9} h={8}><path d="M0 0h9v2H0zM1 4h7L4.500 8z" fill="#3d66a5" /></Icon></GalleryBar>
        </GalleryBars>
      </Gallery>
      <BigButton $w={56}>
        <BigIcon><ArrangeIcon /></BigIcon>
        <BigLine><Text w={48}>Arrange</Text></BigLine>
        <BigLine><Caret /></BigLine>
      </BigButton>
      <BigButton $w={48} $dim>
        <BigIcon><QuickIcon /></BigIcon>
        <BigLine><Text w={33}>Quick</Text></BigLine>
        <BigLine><Text w={34}>Styles</Text><Caret $ml={4} $dim /></BigLine>
      </BigButton>
      <SmallColumn $ml={4}>
        <Small dim icon={<FillIcon />} slot={23} w={56} caret={5}>Shape Fill</Small>
        <Small dim icon={<OutlineIcon />} slot={23} w={81} caret={5}>Shape Outline</Small>
        <Small dim icon={<EffectsIcon />} slot={23} w={79} caret={5}>Shape Effects</Small>
      </SmallColumn>
    </Group>
    <Group w={95} label="Editing" lw={40}>
      <SmallColumn $ml={7}>
        <Small icon={<FindIcon />} slot={22} w={25}>Find</Small>
        <Small icon={<AbAc><span>ab</span><b>a<i>c</i></b></AbAc>} slot={22} w={47} caret={5}>Replace</Small>
        <Small icon={<SelectIcon />} slot={22} w={35} caret={5}>Select</Small>
      </SmallColumn>
    </Group>
  </Ribbon>
);

const RecoveryPane = () => (
  <Recovery>
    <RecoveryHead><Text w={133} size={15}>Document Recovery</Text></RecoveryHead>
    <RecoveryIntro>
      <Text w={257} size={12.500} lh={16} font={TAHOMA}>PowerPoint has recovered the following files.</Text>
      <Text w={185} size={12.500} lh={16} font={TAHOMA}>Save the ones you wish to keep.</Text>
    </RecoveryIntro>
    <RecoveryTitle><Text w={90} bold size={12.500} lh={17} font={TAHOMA}>Available files</Text></RecoveryTitle>
    <FileList>
      <FileItems>
        {[
          [["LISSET.ppt  [Autosaved]", 140], ["Version created from the last Auto...", 209], ["11:42 AM Saturday, November 23,...", 210]],
          [["LISSET.ppt  [Original]", 125], ["Version created last time the user ...", 210], ["11:38 AM Saturday, November 23,...", 210]],
        ].map((item, i) => (
          <FileItem key={i}>
            <PptIcon />
            <FileLines>
              {item.map(([t, w]) => <Text key={t} w={w} size={12.500} lh={18} font={TAHOMA}>{t}</Text>)}
            </FileLines>
          </FileItem>
        ))}
      </FileItems>
      <FileScroll>
        <Icon w={9} h={6}><path d="M0 5.500L4.500 1 9 5.500" stroke="#b5b5b5" strokeWidth="1.800" /></Icon>
        <Icon w={9} h={6}><path d="M0 .5L4.500 5 9 .5" stroke="#b5b5b5" strokeWidth="1.800" /></Icon>
      </FileScroll>
    </FileList>
    <HelpLink>
      <HelpIcon />
      <Text w={165} size={12.500} color="#0000ff" font={TAHOMA}>Which file do I want to save?</Text>
    </HelpLink>
    <CloseButton><Text w={31} size={12.500} font={TAHOMA}>Close</Text></CloseButton>
  </Recovery>
);

const SlidesPanel = () => (
  <SlidesPane>
    <PaneTabs>
      <PaneTabShapes>
        <Icon w={250} h={27}>
          <path d="M68 27V6q0-5 5-5h46q5 0 8 4l15 22z" fill="#a9c5ee" stroke="#5f8cc4" />
          <path d="M0 28V1h52q6 0 9 4l14 23z" fill="#eaf2fd" stroke="#5f8cc4" />
          <path d="M0 16h67l8 12H0z" fill="#cfe0f7" />
        </Icon>
      </PaneTabShapes>
      <PaneTabText $ml={8} $w={68}><Text w={40} bold size={14}>Slides</Text></PaneTabText>
      <PaneTabText $ml={0} $w={155}><Text w={48} size={14.500}>Outline</Text></PaneTabText>
      <Icon w={13} h={12}><path d="M1 0l11 12M12 0L1 12" stroke="#3c5f92" strokeWidth="2.600" /></Icon>
    </PaneTabs>
    <PaneBody>
      <ThumbList>
        {thumbs.map((t, i) => (
          <ThumbRow key={i} $on={i === 3}>
            <ThumbNo>{i + 1}</ThumbNo>
            <ThumbSlide>{t}</ThumbSlide>
          </ThumbRow>
        ))}
      </ThumbList>
      <ScrollTrack $w={20}>
        <Arrow $up $mt={6} />
        <Thumb $h={253} $mt={9} />
        <Arrow $mt={518} />
      </ScrollTrack>
    </PaneBody>
  </SlidesPane>
);

const FadedIcons = () => (
  <Faded>
    <Icon w={31} h={31}>
      <rect x="1.500" y="3.500" width="28" height="25" fill="#fff" stroke="#9aa9c4" />
      <path d="M1 4h29v4H1z" fill="#a5bff0" />
      <path d="M2 13.500h27M2 18.500h27M2 23.500h27M8.500 9v19M15.500 9v19M22.500 9v19" stroke="#d3d9e3" />
    </Icon>
    <Icon w={31} h={31}>
      <path d="M1 13l3-3h6v20H1z" fill="#8fb4dc" stroke="#7897bd" />
      <path d="M10 4l3-3h7v29h-10z" fill="#ecd87f" stroke="#cdb75e" />
      <path d="M19 9l3-3h7v21l-3 3h-7z" fill="#eea292" stroke="#cd8678" />
      <path d="M17 4v26M26 9v20M8 13v17" stroke="#fff" opacity=".5" />
    </Icon>
    <Icon w={32} h={31}>
      <path d="M1 4h22l8 9-8 10H1l7-10z" fill="#c1deb2" stroke="#a0c492" />
      <rect x="10.500" y="14.500" width="19" height="14" fill="#fafcff" stroke="#bcc7d9" />
      <path d="M14 18.500h2M17 18.500h9M14 21.500h2M17 21.500h9M14 24.500h2M17 24.500h9" stroke="#a8b3c8" />
    </Icon>
    <Icon w={31} h={31}>
      <rect x=".8" y=".8" width="29" height="29" fill="#f7fbff" stroke="#9fb0c8" strokeWidth="1.300" />
      <rect x="4" y="4" width="23" height="20" fill="#d5eafa" stroke="#b5c8e2" />
      <circle cx="20" cy="9.500" r="3.500" fill="#fff3e0" stroke="#f0bb95" />
      <path d="M4 24l7-8 6 7 4-5 6 6z" fill="#b4c9ea" />
    </Icon>
    <Icon w={31} h={31}>
      <rect x="1.500" y="3" width="11" height="11" fill="#fad77a" stroke="#b4bfd3" />
      <path d="M3 9l4-3 5 4v3H3z" fill="#f3a35f" />
      <rect x="15.500" y="3" width="11" height="11" fill="#f7f9fc" stroke="#b4bfd3" />
      <circle cx="21" cy="7" r="2.500" fill="#8d9097" /><path d="M17.500 14c0-5 7-5 7 0z" fill="#e09a70" />
      <rect x="1.500" y="17" width="11" height="11" fill="#9ad6ba" stroke="#b4bfd3" />
      <path d="M4 21h4M6 19v4M8 25h3M9.500 23v4" stroke="#fcf5a5" strokeWidth="1.400" />
      <rect x="15.500" y="17" width="11" height="11" fill="#dce6fb" stroke="#b4bfd3" />
      <path d="M16 28l10-9v9z" fill="#bccdf5" />
    </Icon>
    <Icon w={31} h={31}>
      <circle cx="16" cy="13" r="12.500" fill="#dfe3e8" stroke="#b1b7c0" strokeWidth="1.400" />
      {[[16, 5.5], [9, 10.5], [23, 10.500], [11.500, 19], [20.500, 19]].map(([x, y]) => (
        <circle key={x} cx={x} cy={y} r="3.300" fill="#aab6c2" />
      ))}
      <path d="M1 24c2 7 9 7 13 2s9-9 13-5c4 4 2 7-1 9" stroke="#8fbeda" strokeWidth="2.600" />
      <path d="M1 24c2 7 9 7 13 2s9-9 13-5" stroke="#d3e8f4" strokeWidth="1" />
    </Icon>
  </Faded>
);

const Editor = () => (
  <EditorColumn>
    <EditorArea>
      <Canvas>
        <Slide>
          <Block $x={0} $y={0} $w={420} $h={41} $bg={GREEN} />
          <Block $x={0} $y={0} $w={100} $h={782} $bg={GREEN} />
          <Block $x={100} $y={41} $w={40} $h={42} $bg={GREEN} />
          <Block $x={100} $y={41} $w={320} $h={741} $bg="#fff" $r="36px 0 0 0 / 40px 0 0 0" />
          <Block $x={30} $y={201} $w={970} $h={42} $bg={NAVY} $r="25px 0 0 25px / 21px 0 0 21px" />
          <Dotted $x={60} $y={-120} $w={397} $h={251} $r="35px" />
          <Dotted $x={469} $y={-200} $w={673} $h={947} />
          <Dotted $x={469} $y={201} $w={1} $h={42} $c="#fff" $leftOnly />
          <Placed $x={81} $y={76}><Text w={256} size={33.300} lh={38} bold color={TEAL}>Click to add title</Text></Placed>
          <Bullet />
          <Placed $x={526} $y={-14}><Text w={377} size={53.300} lh={60}>Click to add text</Text></Placed>
          <FadedIcons />
          {[["Index", 455, 58], ["Array", 498, 57], ["Value", 545, 60], ["Trace", 593, 61]].map(([t, y, w]) => (
            <Placed key={t} $x={135} $y={y - 11}><Text w={w} size={24} lh={28}>{t}</Text></Placed>
          ))}
          <Table>
            {rows.flatMap((r, i) =>
              r.map((c, j) => <Cell key={`${i}-${j}`} $first={j === 0} $top={i === 0}>{c}</Cell>)
            )}
          </Table>
        </Slide>
      </Canvas>
      <RightScroll>
        <ScrollTrack $w={19} $grow>
          <Arrow $up $mt={8} />
          <Thumb $h={65} $mt={246} />
          <Arrow $mt={383} />
        </ScrollTrack>
        <PageButtons>
          <Arrow $up $s={5} $c="#000" /><Arrow $up $s={5} $c="#000" $mt={1} />
          <Arrow $s={5} $c="#000" $mt={9} /><Arrow $s={5} $c="#000" $mt={1} />
        </PageButtons>
      </RightScroll>
    </EditorArea>
    <Splitter />
    <Notes>
      <NotesText><Text w={158} size={18} color="#000" font={TAHOMA}>Click to add notes</Text></NotesText>
      <ScrollTrack $w={19}>
        <Arrow $up $mt={7} $c="#6c80a8" />
        <Arrow $mt={18} $c="#6c80a8" />
      </ScrollTrack>
    </Notes>
  </EditorColumn>
);

const Status = () => (
  <StatusBar>
    <StatusCell $w={75} $mr={8}><Text w={67}>Slide 4 of 9</Text></StatusCell>
    <StatusCell $w={72} $mr={0}><Text w={63}>"Capsules"</Text></StatusCell>
    <StatusRight>
      <ViewButtons>
        <Icon w={14} h={13}><path d="M1 1h12v11H1zM4 1v11M7 4h4v4H7zM5 10h8" stroke="#4b5563" strokeWidth="1.600" /></Icon>
        <Icon w={14} h={13}><path d="M1 2h4v3H1zM9 2h4v3H9zM1 8.500h4v3H1zM9 8.500h4v3H9z" stroke="#4b5563" strokeWidth="1.600" /></Icon>
        <Icon w={14} h={14}><path d="M0 1.500h14M2 2v6h10V2M7 8v4M4 13h6" stroke="#4b5563" strokeWidth="1.800" /><path d="M3 3h8v4H3z" fill="#f4f6fa" /></Icon>
      </ViewButtons>
      <Text w={31}>100%</Text>
      <Icon w={206} h={24}>
        <path d="M30 13h126" stroke="#e6effc" />
        <path d="M30 12h126" stroke="#54759f" />
        <circle cx="20" cy="12" r="9" fill="#dbe7f8" stroke="#5577a8" strokeWidth="1.300" />
        <path d="M15 12h10" stroke="#3f5779" strokeWidth="2" />
        <path d="M88 4.500h10v10l-5 6-5-6z" fill="#eef4fc" stroke="#5577a8" />
        <path d="M93 8v8" stroke="#5577a8" />
        <circle cx="167" cy="12" r="9" fill="#dbe7f8" stroke="#5577a8" strokeWidth="1.300" />
        <path d="M162 12h10M167 7v10" stroke="#3f5779" strokeWidth="2" />
        <rect x="187" y="3.500" width="18" height="17" rx="2" fill="#f2f5fa" stroke="#6c7c94" />
        <path d="M196 5v5M196 14v5M189 12h5M198 12h5M194 8l2 2 2-2M194 16l2-2 2 2M192 10l2 2-2 2M200 10l-2 2 2 2" stroke="#1f2937" />
      </Icon>
    </StatusRight>
  </StatusBar>
);

const Taskbar = () => (
  <TaskBar>
    <StartCell>
      <Icon w={20} h={20}>
        <path d="M0 2.800L8.500 1.600v8H0zM9.500 1.500L20 0v9.600H9.500zM0 10.500h8.500v8L0 17.300zM9.500 10.500H20V20L9.500 18.600z" fill="#fff" />
      </Icon>
    </StartCell>
    <Search>
      <Ring />
      <Text w={154} size={17}>Type here to search</Text>
      <Icon w={14} h={22}>
        <rect x="4" y="1" width="6" height="13" rx="2.500" stroke="#333" strokeWidth="1.500" />
        <path d="M1 10v3c0 6 12 6 12 0v-3M7 17.500V21M4 21h6" stroke="#333" strokeWidth="1.500" />
      </Icon>
    </Search>
    <TaskCell $w={60}>
      <Icon w={21} h={20}>
        <path d="M1 0v3h13V0M1 20v-3h13v3M1 6h13v8H1zM19 0v20" stroke="#e6e6e6" strokeWidth="1.500" />
        <path d="M18 7h3v3h-3z" fill="#fff" />
      </Icon>
    </TaskCell>
    <TaskCell $w={51} $ml={9} $mr={5} $line>
      <Icon w={29} h={29}>
        <defs>
          <linearGradient id="ff" x1=".8" y1="0" x2=".3" y2="1">
            <stop offset="0" stopColor="#ffe43a" />
            <stop offset=".45" stopColor="#ff8a1c" />
            <stop offset="1" stopColor="#f0264e" />
          </linearGradient>
        </defs>
        <path d="M2 7l3 3c1-2 3-3 5-3 0-3 2-6 4-7 0 4 5 5 7 8l3-3c5 6 6 13 2 18-7 9-20 7-24-2C0 16 0 11 2 7z" fill="url(#ff)" />
        <circle cx="14.500" cy="15.500" r="6.500" fill="#7a3fd1" />
        <path d="M4 11c4-2 8 1 11 1 1 2-3 3-4 4s0 4 4 5c-5 2-11-3-11-10z" fill="#ff9a1f" />
      </Icon>
    </TaskCell>
    <TaskCell>
      <Icon w={25} h={26}>
        <path d="M1 11C3 3 9 0 14 0c7 0 11 5 11 11v4H8c0 8 10 8 15 4v5c-8 4-20 2-20-9 0-4 3-7 6-8-1 1-2 3-1 4h10c0-8-12-7-17 0z" fill="#0c7bdb" />
      </Icon>
    </TaskCell>
    <TaskCell>
      <Icon w={28} h={24}>
        <path d="M0 0h11l2 3h15v21H0z" fill="#fadb7f" />
        <path d="M0 3h28v4H0z" fill="#f5c84f" />
        <path d="M5 24V13q0-1 1-1h16q1 0 1 1v11h-5v-5h-8v5z" fill="#3fb2e8" />
        <path d="M0 0h6v2H0z" fill="#f0b93a" />
      </Icon>
    </TaskCell>
    <TaskCell>
      <Icon w={29} h={29}>
        <path d="M9 9V5c0-5 11-5 11 0v4" stroke="#c9c9c9" strokeWidth="2" />
        <path d="M0 7h29v19q0 2-2 2H2q-2 0-2-2z" fill="#fff" />
        <path d="M8 11h6v6H8z" fill="#f25022" /><path d="M15 11h6v6h-6z" fill="#7fba00" />
        <path d="M8 18h6v6H8z" fill="#00a4ef" /><path d="M15 18h6v6h-6z" fill="#ffb900" />
      </Icon>
    </TaskCell>
    <TaskCell>
      <Icon w={30} h={24}>
        <path d="M0 8L15 0l15 8v16H0z" fill="#fff" />
        <path d="M1 8h28L19 14l2 4-8-4z" fill="#111" />
      </Icon>
    </TaskCell>
    <TaskCell $w={62} $on $line>
      <Icon w={29} h={27}>
        <path d="M3 0h24l1 4v22l-9-2H4z" fill="#fbe3d8" stroke="#eab39c" />
        <path d="M2 1h22l1 22-24-2z" fill="#e2683f" />
        <path d="M8 8h19l1 12-20-1z" fill="#fff3ec" />
        <path d="M9 9h7v9H9z" fill="#d8441f" />
        <path d="M15 11h-4v5h4M11 13.500h3.500" stroke="#fff" strokeWidth="1.500" />
        <path d="M25 11.500c-5-2-7 5-1 5.500" stroke="#c93f1f" strokeWidth="2.600" />
      </Icon>
    </TaskCell>
    <Tray>
      <TrayIcons>
        <TrayCell $w={45}>
          <Icon w={18} h={20}>
            <circle cx="12.500" cy="4" r="3.300" stroke="#fff" strokeWidth="1.400" />
            <path d="M8 9c3-3 8-2 9 4M8 9l2 3" stroke="#fff" strokeWidth="1.400" />
            <circle cx="6" cy="11" r="3.300" stroke="#fff" strokeWidth="1.400" />
            <path d="M1 20c0-7 9-7 10 0" stroke="#fff" strokeWidth="1.400" />
          </Icon>
        </TrayCell>
        <TrayCell $w={29}><Icon w={15} h={9}><path d="M.5 8.500l7-7 7 7" stroke="#fff" strokeWidth="1.400" /></Icon></TrayCell>
        <TrayCell $w={32}>
          <Icon w={20} h={14}>
            <path d="M5 3h13v9H3V8" stroke="#fff" strokeWidth="1.300" />
            <path d="M7 5h9v5H6V8zM18.500 5.500h1.500v4h-1.500zM0 2h5v3q-2.500 3-5 0zM1 0v2M4 0v2" fill="#fff" stroke="#fff" strokeWidth=".5" />
          </Icon>
        </TrayCell>
        <TrayCell $w={27}>
          <Icon w={16} h={16}>
            <path d="M1 15C1 7 7 1 15 1M5 15C5 9.500 9.500 5 15 5M9 15c0-3.500 2.500-6 6-6" stroke="#fff" strokeWidth="1.200" />
            <circle cx="14" cy="14" r="1.700" fill="#fff" />
          </Icon>
        </TrayCell>
        <TrayCell $w={28}>
          <Icon w={21} h={16}>
            <path d="M1 5h3l4-4v14l-4-4H1z" stroke="#fff" strokeWidth="1.200" />
            <path d="M11 5q2 3 0 6M14 3q4 5 0 10M17 1q5 7 0 14" stroke="#fff" strokeWidth="1.200" />
          </Icon>
        </TrayCell>
      </TrayIcons>
      <Clock>
        <Text w={53} size={14} lh={22}>9:36 PM</Text>
        <Text w={76} size={14} lh={22}>11/23/2019</Text>
      </Clock>
      <TrayCell $w={45}>
        <Icon w={34} h={32}>
          <path d="M0 4h20v16h-7l-5 4v-4H0z" fill="#fff" />
          <path d="M4 8h12M4 12h12M4 16h8" stroke="#111" strokeWidth="1.500" />
          <circle cx="20" cy="24" r="9.500" fill="#2f2f2f" stroke="#8a8a8a" />
          <text x="20" y="29" fontSize="14" fill="#fff" textAnchor="middle" fontFamily="Open Sans, sans-serif">1</text>
        </Icon>
      </TrayCell>
      <ShowDesktop />
    </Tray>
  </TaskBar>
);

export default function App() {
  return (
    <>
      <Global />
      <Screen>
        <TitleBar>
          <QuickAccess>
            <QuickCell $w={28}><SaveIcon /></QuickCell>
            <QuickCell $w={20}><UndoIcon /></QuickCell>
            <QuickCell $w={16}><Caret $dim /></QuickCell>
            <RedoIcon />
          </QuickAccess>
          <QuickMore />
          <TitleText><Text w={351} size={14.500} color="#111">AB.ppt [Compatibility Mode] - Microsoft PowerPoint</Text></TitleText>
          <WinButtons>
            <Icon w={12} h={12}><path d="M0 5.500h12" stroke="#000" /></Icon>
            <Icon w={12} h={12}><path d="M.5 2.500h9v9h-9zM2.500 2.500v-2h9v9h-2" stroke="#000" /></Icon>
            <Icon w={12} h={12}><path d="M0 0l12 12M12 0L0 12" stroke="#000" strokeWidth="1.100" /></Icon>
          </WinButtons>
        </TitleBar>
        <TabStrip>
          {[
            ["Home", 59, 10, 36], ["Insert", 67, 17, 33], ["Design", 69, 11, 41], ["Animations", 92, 11, 65],
            ["Slide Show", 93, 11, 64], ["Review", 68, 11, 41], ["View", 60, 11, 28],
          ].map(([t, w, pl, tw], i) => (
            <Tab key={t} $w={w} $pl={pl} $active={i === 0}>
              <Text w={tw} size={13}>{t}</Text>
            </Tab>
          ))}
          <HelpSlot><HelpIcon /></HelpSlot>
        </TabStrip>
        <RibbonBack><RibbonBar /></RibbonBack>
        <Work>
          <RecoveryPane />
          <SlidesPanel />
          <Editor />
        </Work>
        <Status />
        <Taskbar />
        <Orb><OfficeOrb /></Orb>
        <Watermark>
          <Text w={198} size={24} lh={34}>Activate Windows</Text>
          <Text w={285} size={17.500} lh={28}>Go to Settings to activate Windows.</Text>
        </Watermark>
      </Screen>
    </>
  );
}
